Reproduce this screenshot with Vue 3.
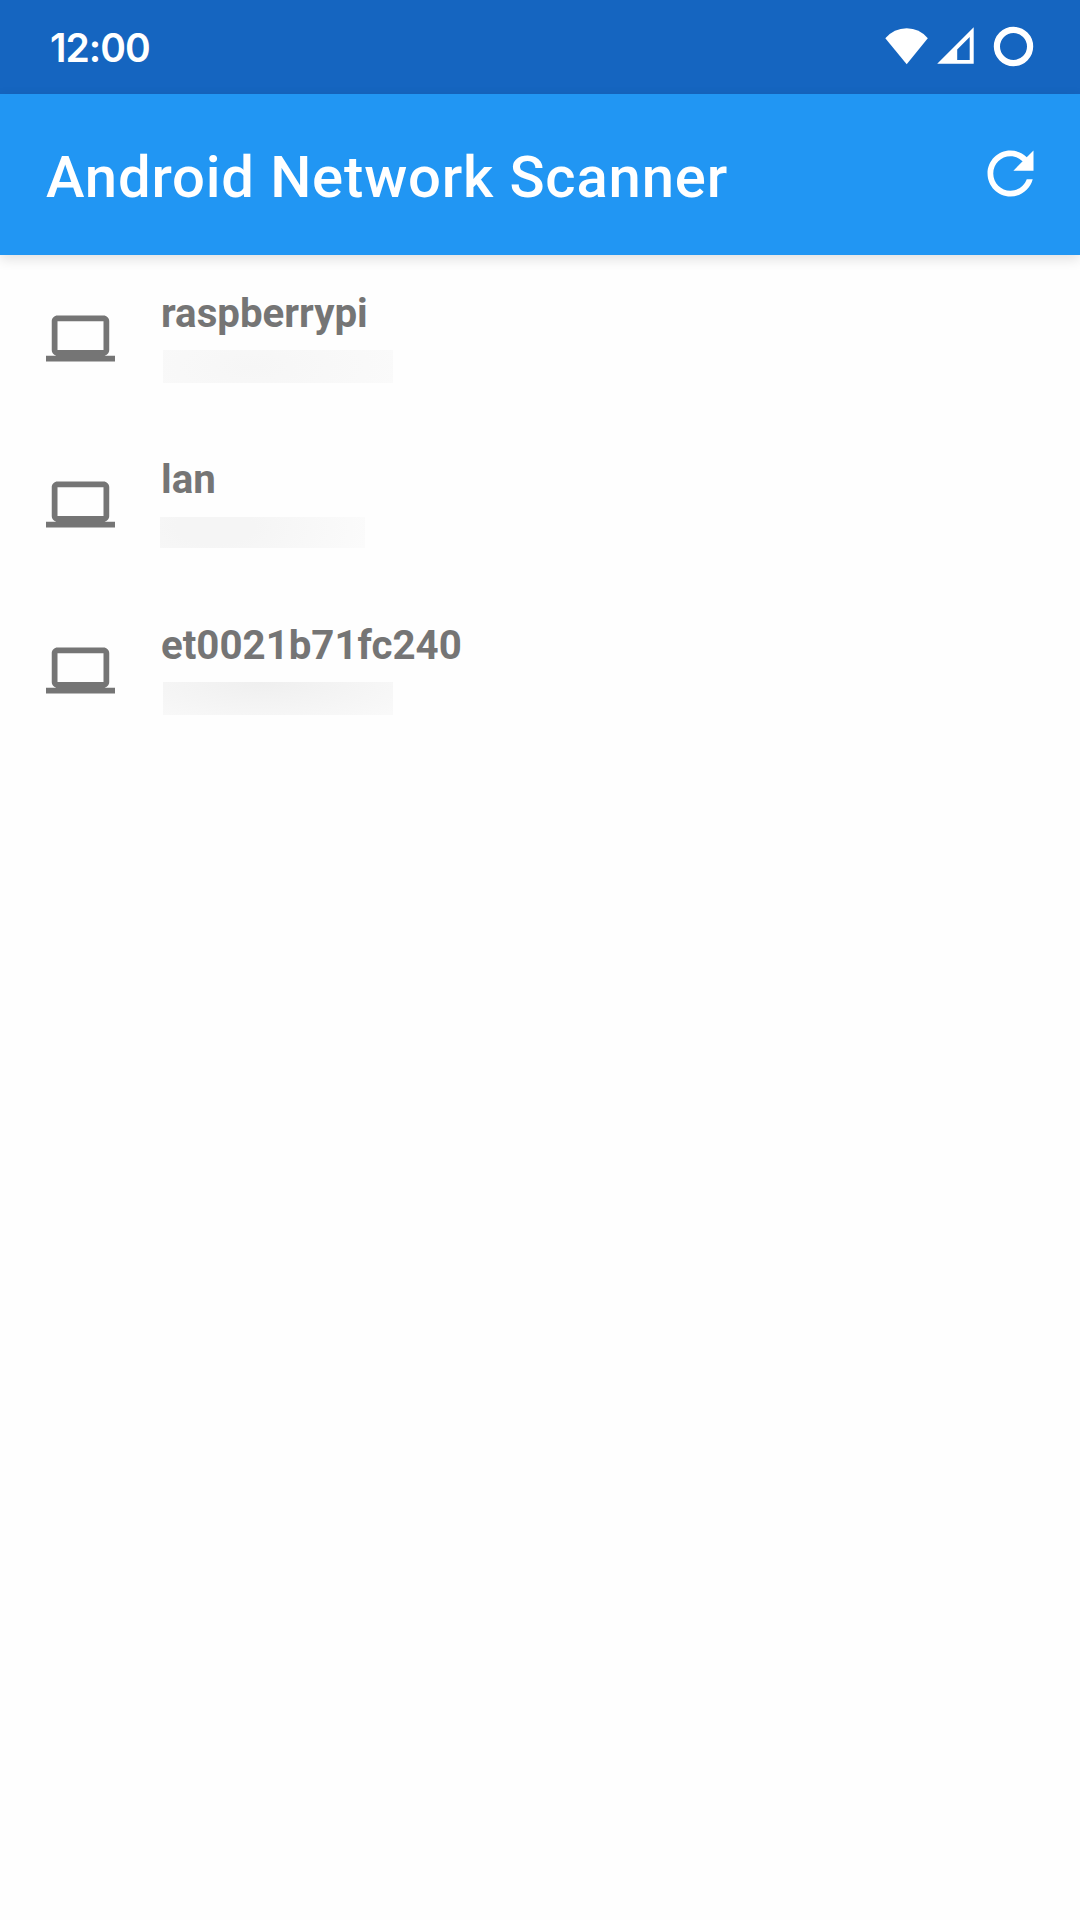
<script setup>
const devices = [
  { name: 'raspberrypi', variant: 'first' },
  { name: 'lan', variant: 'second' },
  { name: 'et0021b71fc240', variant: 'third' },
]
</script>

<template>
  <div class="screen">
    <header class="status">
      <span class="clock">12:00</span>
      <svg class="indicators" width="156" height="94" viewBox="0 0 156 94" fill="#fff">
        <path d="M1.3 38.3Q10 28.3 22.7 28.3Q35.500 28.300 43.800 38.300L22.700 64.300Z" />
        <path fill-rule="evenodd" d="M89.700 27.300V63.700H53.200ZM85.700 37L73.200 49.500V60H85.700Z" />
        <circle cx="129.500" cy="46.500" r="16.600" fill="none" stroke="#fff" stroke-width="6.200" />
      </svg>
    </header>
    <div class="toolbar">
      <h1 class="title">Android Network Scanner</h1>
      <svg class="refresh" width="69" height="69" viewBox="0 0 24 24" fill="#fff">
        <path d="M17.65 6.35C16.2 4.9 14.21 4 12 4c-4.42 0-7.99 3.58-7.99 8s3.570 8 7.990 8c3.730 0 6.840-2.550 7.730-6h-2.080c-.82 2.330-3.040 4-5.650 4-3.310 0-6-2.690-6-6s2.690-6 6-6c1.660 0 3.140.69 4.220 1.780L13 11h7V4l-2.350 2.350z" />
      </svg>
    </div>
    <main class="list">
      <div v-for="device in devices" :key="device.name" class="row">
        <svg class="laptop" width="69" height="69" viewBox="0 0 24 24" fill="#757575">
          <path d="M20 18c1.100 0 1.990-.9 1.990-2L22 6c0-1.100-.9-2-2-2H4c-1.100 0-2 .9-2 2v10c0 1.100.9 2 2 2H0v2h24v-2h-4zM4 6h16v10H4V6z" />
        </svg>
        <div class="info">
          <div class="name">{{ device.name }}</div>
          <div class="address" :class="device.variant"></div>
        </div>
      </div>
    </main>
  </div>
</template>

<style>
body {
  background: #fefefe;
}
</style>

<style scoped>
.screen {
  width: 1080px;
  height: 1920px;
  overflow: hidden;
  background: #fefefe;
  font-family: Roboto, sans-serif;
}
.status {
  display: flex;
  justify-content: space-between;
  height: 94px;
  padding: 0 40px 0 50px;
  background: #1565c0;
}
.clock {
  font-family: Inter, sans-serif;
  font-size: 39px;
  font-weight: 600;
  line-height: 95px;
  letter-spacing: -1px;
  color: #fff;
}
.toolbar {
  position: relative;
  display: flex;
  align-items: center;
  justify-content: space-between;
  height: 161px;
  box-sizing: border-box;
  padding: 0 35px 2px 46px;
  background: #2196f3;
  box-shadow: 0 4px 12px rgba(0, 0, 0, 0.12);
}
.title {
  margin: 7px 0 0;
  font-size: 58px;
  font-weight: 500;
  line-height: 68px;
  letter-spacing: 0.83px;
  color: #fff;
}
.list {
  padding-top: 23px;
}
.row {
  display: flex;
  align-items: flex-start;
  gap: 46px;
  height: 166px;
  padding-left: 46px;
}
.laptop {
  margin-top: 26px;
}
.info {
  padding-top: 12px;
}
.name {
  font-size: 40.25px;
  font-weight: 700;
  line-height: 48px;
  color: #757575;
}
.address {
  margin: 12px 0 0 2px;
  width: 230px;
  height: 33px;
}
.first {
  background: radial-gradient(ellipse 150px 60px at 90px 17px, #f6f6f6, #fafafa);
}
.second {
  margin: 13px 0 0 -1px;
  width: 205px;
  height: 31px;
  background: radial-gradient(ellipse 155px 70px at 55px 10px, #f5f5f5 25%, #fbfbfb);
}
.third {
  background: radial-gradient(ellipse 165px 48px at 100px 0, #efefef, #f9f9f9);
}
</style>
